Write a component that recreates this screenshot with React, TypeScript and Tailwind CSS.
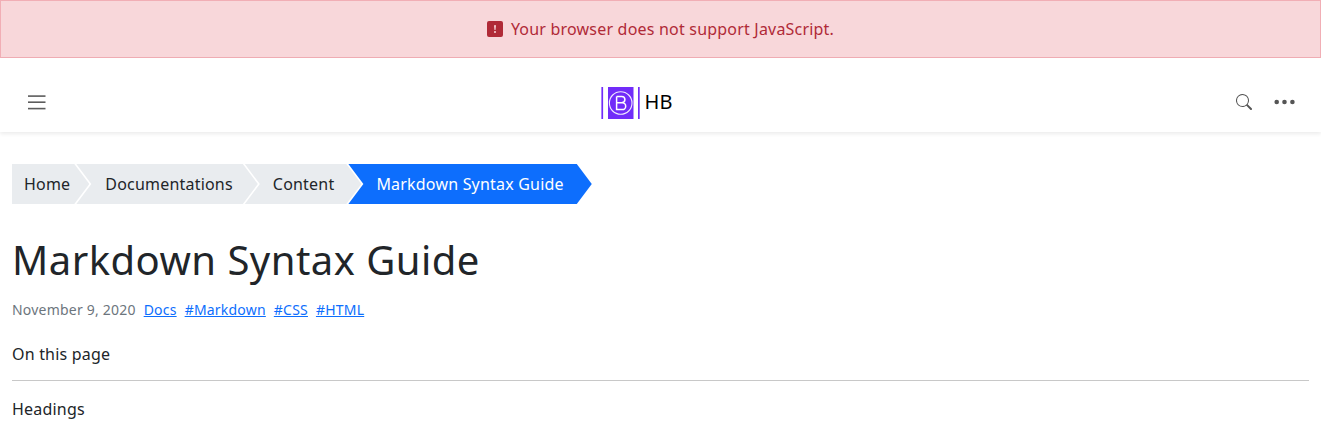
import React from "react";

const F = "font-['Noto_Sans','Open_Sans',sans-serif]";

function Crumb({ label, cls }: { label: string; cls: string }) {
  return (
    <a className={`flex h-10 items-center whitespace-nowrap text-base ${cls}`}>{label}</a>
  );
}

export default function App() {
  return (
    <div className={`w-[1321px] h-[422px] overflow-hidden bg-white tracking-[0.2px] text-[#212529] ${F}`}>
      <div className="flex h-[58px] items-center justify-center gap-2 border border-[#f1aeb5] bg-[#f8d7da] text-base text-[#b02a37]">
        <svg width="16" height="16" viewBox="0 0 16 16" fill="#b02a37">
          <path d="M2 0a2 2 0 0 0-2 2v12a2 2 0 0 0 2 2h12a2 2 0 0 0 2-2V2a2 2 0 0 0-2-2H2zm6 4c.535 0 .954.462.9.995l-.35 3.507a.552.552 0 0 1-1.1 0L7.1 4.995A.905.905 0 0 1 8 4zm.002 6a1 1 0 1 1 0 2 1 1 0 0 1 0-2z" />
        </svg>
        <span>Your browser does not support JavaScript.</span>
      </div>
      <header className="flex h-[74px] items-center justify-between pl-[28px] pr-[25px] pt-[14px] shadow-[0_2px_4px_rgba(0,0,0,0.08)]">
        <svg width="18" height="16" viewBox="0 0 18 16" fill="#5c5c5c">
          <rect x="0" y="1.300" width="17.500" height="1.600" />
          <rect x="0" y="7.400" width="17.500" height="1.600" />
          <rect x="0" y="13.800" width="17.500" height="1.600" />
        </svg>
        <div className="mr-[9px] flex items-center gap-[5px]">
          <svg className="mt-[2px]" width="39" height="32" viewBox="0 0 39 32">
            <rect x="0.400" width="1.700" height="32" fill="#712cf9" />
            <rect x="37" width="1.700" height="32" fill="#712cf9" />
            <rect x="7" width="25.500" height="32" fill="#712cf9" />
            <circle cx="19.700" cy="16" r="11.300" fill="none" stroke="#fff" strokeWidth="1.100" opacity="0.9" />
            <path d="M15.600 9.400H20.700A3.200 3.200 0 0 1 20.700 15.800H15.600M20.700 15.800H21.300A3.400 3.400 0 0 1 21.300 22.600H15.600V9.400" fill="none" stroke="#fff" strokeWidth="1.500" />
          </svg>
          <span className="text-xl tracking-normal text-black">HB</span>
        </div>
        <div className="flex items-center gap-[22px]">
          <svg width="16" height="16" viewBox="0 0 16 16" fill="#555">
            <path d="M11.742 10.344a6.500 6.500 0 1 0-1.397 1.398h-.001c.03.04.062.078.098.115l3.850 3.850a1 1 0 0 0 1.415-1.414l-3.850-3.850a1.007 1.007 0 0 0-.115-.100zM12 6.500a5.500 5.500 0 1 1-11 0 5.500 5.500 0 0 1 11 0z" />
          </svg>
          <svg width="22" height="22" viewBox="0 0 22 22" fill="#555">
            <circle cx="2.700" cy="11" r="2.300" />
            <circle cx="10.500" cy="11" r="2.300" />
            <circle cx="18.400" cy="11" r="2.300" />
          </svg>
        </div>
      </header>
      <main className="px-3 pt-8">
        <nav className="flex">
          <Crumb label="Home" cls="bg-[#e9ecef] pl-3 pr-[19px] [clip-path:polygon(0_0,calc(100%-15px)_0,100%_50%,calc(100%-15px)_100%,0_100%)]" />
          <Crumb label="Documentations" cls="-ml-[13px] bg-[#e9ecef] pl-[29px] pr-[25px] [clip-path:polygon(0_0,calc(100%-15px)_0,100%_50%,calc(100%-15px)_100%,0_100%,15px_50%)]" />
          <Crumb label="Content" cls="-ml-[13px] bg-[#e9ecef] pl-[28px] pr-[27px] [clip-path:polygon(0_0,calc(100%-15px)_0,100%_50%,calc(100%-15px)_100%,0_100%,15px_50%)]" />
          <Crumb label="Markdown Syntax Guide" cls="-ml-[13px] bg-[#0d6efd] pl-[28px] pr-[28px] text-white [clip-path:polygon(0_0,calc(100%-15px)_0,100%_50%,calc(100%-15px)_100%,0_100%,15px_50%)]" />
        </nav>
        <h1 className="mt-[32px] text-[40px] leading-[48px] font-normal tracking-[0.47px]">Markdown Syntax Guide</h1>
        <div className="mt-[15px] flex h-[21px] items-center gap-2 text-sm tracking-[0.21px]">
          <span className="text-[#6c757d]">November 9, 2020</span>
          <a className="text-[#0d6efd] underline">Docs</a>
          <a className="text-[#0d6efd] underline">#Markdown</a>
          <a className="text-[#0d6efd] underline">#CSS</a>
          <a className="text-[#0d6efd] underline">#HTML</a>
        </div>
        <p className="mt-[22px] text-base leading-6">On this page</p>
        <hr className="mt-[14px] border-[#c8c8c8]" />
        <p className="mt-4 text-base leading-6">Headings</p>
      </main>
    </div>
  );
}
